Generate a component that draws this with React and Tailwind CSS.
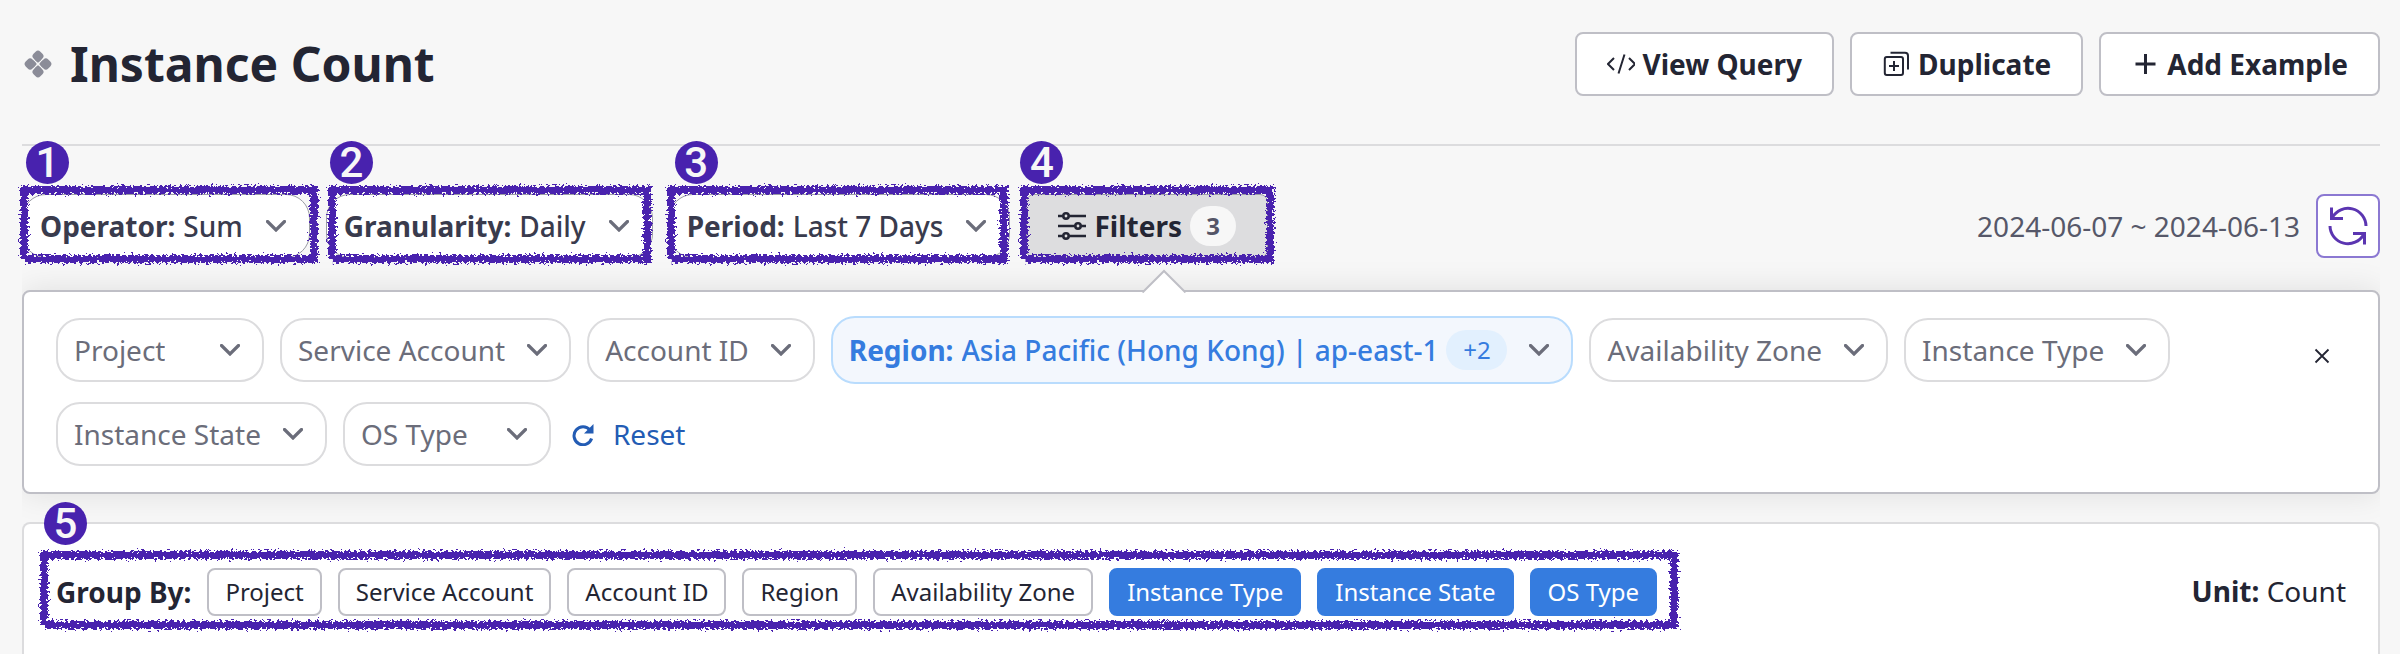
import { clsx } from "clsx";

const GROUPS = [
  { name: "Project" },
  { name: "Service Account" },
  { name: "Account ID" },
  { name: "Region" },
  { name: "Availability Zone" },
  { name: "Instance Type", on: true },
  { name: "Instance State", on: true },
  { name: "OS Type", on: true },
];

function Chevron() {
  return (
    <svg className="pointer-events-none ml-auto h-3 w-5 shrink-0" viewBox="0 0 20 12" fill="none" stroke="#6b6d7a" strokeWidth="3.2" aria-hidden="true">
      <path d="M1.5 1.5 10 10l8.5-8.5" strokeLinecap="round" strokeLinejoin="miter" />
    </svg>
  );
}

function RoughFilter() {
  return (
    <svg className="absolute h-0 w-0" aria-hidden="true">
      <filter id="rough" x="-5%" y="-20%" width="110%" height="140%">
        <feTurbulence type="fractalNoise" baseFrequency="0.35 0.5" numOctaves="3" seed="7" result="noise" />
        <feDisplacementMap in="SourceGraphic" in2="noise" scale="10" xChannelSelector="R" yChannelSelector="G" />
      </filter>
    </svg>
  );
}

function Callout({ number, box, badge }) {
  return (
    <>
      <span className={clsx("pointer-events-none absolute z-20 [clip-path:polygon(-4px_-4px,calc(100%+4px)_-4px,calc(100%+4px)_calc(100%+4px),5px_calc(100%+4px),5px_calc(100%-4px),-4px_calc(100%-4px))]", box)}>
        <span className="block h-full w-full border-8 border-[#4822ae] [filter:url(#rough)]" />
      </span>
      <span className={clsx("pointer-events-none absolute z-20 flex h-[43px] w-[43px] items-center justify-center rounded-full bg-[#4822ae] font-[Roboto] text-[42px] leading-10 font-medium text-[#f7f7f7]", badge)}>
        {number}
      </span>
    </>
  );
}

function Dropdown({ label, value, children }) {
  return (
    <div className="relative">
      <label className="flex h-16 items-center rounded-3xl border border-[#9b9ca5] bg-white pr-[23px] pl-[17px] text-[#393b4d]">
        <span className="mr-2 font-bold">{label}:</span>
        <select className="mr-[23px] appearance-none bg-transparent p-0 font-medium [field-sizing:content]">
          <option>{value}</option>
        </select>
        <Chevron />
      </label>
      {children}
    </div>
  );
}

function FilterSelect({ name }) {
  return (
    <div className="flex h-16 min-w-52 items-center rounded-3xl border-2 border-[#dcdcde] bg-white pr-[22px] pl-4 text-[#6b6d7a]">
      <select aria-label={name} className="mr-[22px] appearance-none bg-transparent p-0 [field-sizing:content]">
        <option>{name}</option>
      </select>
      <Chevron />
    </div>
  );
}

function ActionButton({ icon, children }) {
  return (
    <button className="flex h-16 items-center gap-2 rounded-lg border-2 border-[#bfbfc6] bg-white px-[30px] font-bold">
      {icon}
      {children}
    </button>
  );
}

const iconProps = { className: "h-7 w-7 shrink-0", viewBox: "0 0 28 28", fill: "none", stroke: "currentColor", "aria-hidden": true };

export default function App() {
  return (
    <div className="min-h-screen overflow-hidden bg-[#f7f7f7] pt-8 pr-5 pl-[22px] font-['Noto_Sans',sans-serif] text-[28px] leading-[38px] text-[#232533]">
      <RoughFilter />
      <header className="flex items-center border-b-2 border-[#dcdcde] pb-12">
        <svg className="h-8 w-8 shrink-0" viewBox="0 0 32 32" fill="#8b8c98" aria-hidden="true">
          <g transform="rotate(45 16 16)">
            <rect x="5.6" y="5.6" width="9.7" height="9.7" rx="3.4" />
            <rect x="16.7" y="5.6" width="9.7" height="9.7" rx="3.4" />
            <rect x="5.6" y="16.7" width="9.7" height="9.7" rx="3.4" />
            <rect x="16.7" y="16.7" width="9.7" height="9.7" rx="3.4" />
            <rect x="10" y="10" width="5.3" height="5.3" rx="1" />
            <rect x="16.7" y="10" width="5.3" height="5.3" rx="1" />
            <rect x="10" y="16.7" width="5.3" height="5.3" rx="1" />
            <rect x="16.7" y="16.7" width="5.3" height="5.3" rx="1" />
          </g>
        </svg>
        <h1 className="ml-4 text-5xl leading-[64px] font-bold">Instance Count</h1>
        <div className="ml-auto flex gap-4">
          <ActionButton
            icon={
              <svg {...iconProps} strokeWidth="2">
                <path d="m7 8-6 6 6 6M22 8l6 6-6 6M17.5 4.5l-6 19" />
              </svg>
            }
          >
            View Query
          </ActionButton>
          <ActionButton
            icon={
              <svg {...iconProps} strokeWidth="2">
                <rect x="2.8" y="7" width="18.2" height="18" rx="2" />
                <path d="M8.5 2.8H23a3 3 0 0 1 3 3V19.5M12 11v10M7 16h10" />
              </svg>
            }
          >
            Duplicate
          </ActionButton>
          <ActionButton
            icon={
              <svg {...iconProps} strokeWidth="3">
                <path d="M14.5 4v20M4.5 14h20" />
              </svg>
            }
          >
            Add Example
          </ActionButton>
        </div>
      </header>

      <div className="relative z-10 flex items-center gap-4 pt-12 pb-8">
        <Dropdown label="Operator" value="Sum">
          <Callout number="1" box="-top-2 -bottom-[5px] -left-0.5 -right-2" badge="-top-[53px] left-1" />
        </Dropdown>
        <Dropdown label="Granularity" value="Daily">
          <Callout number="2" box="-top-2 -bottom-[5px] left-0.5 right-0.5" badge="-top-[53px] left-1" />
        </Dropdown>
        <Dropdown label="Period" value="Last 7 Days">
          <Callout number="3" box="-top-2 -bottom-[5px] -left-0.5 right-0.5" badge="-top-[53px] left-1.5" />
        </Dropdown>
        <div className="relative">
          <button className="flex h-16 items-center gap-2 rounded-lg border border-[#9b9ca5] bg-[#dddddf] px-[31px] font-bold" aria-expanded="true">
            <svg {...iconProps} strokeWidth="2.6">
              <path d="M0 4h4.8M11.2 4H28M0 14h16.8M23.2 14H28M0 24h4.8M11.2 24H28" />
              <circle cx="8" cy="4" r="2.7" />
              <circle cx="20" cy="14" r="2.7" />
              <circle cx="8" cy="24" r="2.7" />
            </svg>
            Filters
            <span className="flex h-10 w-[46px] items-center justify-center rounded-[20px] bg-[#f7f7f7] text-2xl text-[#545567]">3</span>
          </button>
          <svg className="absolute top-[75px] left-[115px] h-6 w-[46px]" viewBox="0 0 46 24" fill="none" aria-hidden="true">
            <path d="M1 24 23 2l22 22z" fill="#fff" />
            <path d="M1.5 23.5 23 2l21.5 21.5" stroke="#bfbfc6" strokeWidth="2" />
          </svg>
          <Callout number="4" box="-top-2 -bottom-[5px] -left-1.5 -right-1.5" badge="-top-[53px] -left-1.5" />
        </div>
        <time className="ml-auto text-[#565869]">2024-06-07 ~ 2024-06-13</time>
        <button aria-label="Refresh" className="flex h-16 w-16 items-center justify-center rounded-lg border-2 border-[#8b78d2] bg-white text-[#5b35b1]">
          <svg className="h-10 w-10" viewBox="0 0 40 40" fill="none" stroke="currentColor" strokeWidth="3" aria-hidden="true">
            <path d="M38 20A18 18 0 0 0 4.3 11.5M2 20a18 18 0 0 0 33.7 8.5" />
            <path d="M3.5 1.5v11H15M36.5 38.5v-11H25" />
          </svg>
        </button>
      </div>

      <div className="[overflow-x:clip]">
        <section aria-label="Filters" className="flex items-start rounded-lg border-2 border-[#bfbfc6] bg-white py-6 pr-10 pl-8 shadow-[0_0_32px_rgba(0,0,0,0.1)]">
          <div className="flex flex-1 flex-wrap items-center gap-4">
            <FilterSelect name="Project" />
            <FilterSelect name="Service Account" />
            <FilterSelect name="Account ID" />
            <div className="flex h-[68px] items-center rounded-3xl border-2 border-[#b9dcfd] bg-[#f3f7fd] pr-[22px] pl-4 text-[#357cdf]">
              <label htmlFor="region" className="mr-2 font-bold">Region:</label>
              <select id="region" className="appearance-none bg-transparent p-0 font-medium [field-sizing:content]">
                <option>Asia Pacific (Hong Kong) | ap-east-1</option>
              </select>
              <span className="mr-[22px] ml-2 flex h-10 w-[61px] items-center justify-center rounded-[20px] bg-[#e2f0fe] text-2xl">+2</span>
              <Chevron />
            </div>
            <FilterSelect name="Availability Zone" />
            <FilterSelect name="Instance Type" />
            <FilterSelect name="Instance State" />
            <FilterSelect name="OS Type" />
            <button className="flex h-[68px] items-center gap-[18px] px-1 text-[#235cb4]">
              <svg className="h-6 w-6" viewBox="0 0 24 24" fill="none" stroke="currentColor" strokeWidth="3" aria-hidden="true">
                <path d="M20.6 16.5A9 9 0 1 1 19 8" />
                <path d="M22.5 2v9.5H13z" fill="currentColor" stroke="none" />
              </svg>
              Reset
            </button>
          </div>
          <button aria-label="Close" className="mt-6 flex h-8 w-8 items-center justify-center">
            <svg className="h-4 w-4" viewBox="0 0 16 16" fill="none" stroke="#232533" strokeWidth="1.8" aria-hidden="true">
              <path d="m1.5 1.5 13 13M14.5 1.5l-13 13" />
            </svg>
          </button>
        </section>
      </div>

      <section className="relative mt-7 flex min-h-40 items-start rounded-t-lg border-2 border-b-0 border-[#dcdcde] bg-white px-8 pt-11">
        <div className="relative flex items-center gap-4">
          <span className="font-bold">Group By:</span>
          {GROUPS.map(({ name, on }) => (
            <button
              key={name}
              aria-pressed={!!on}
              className={clsx(
                "h-12 rounded-lg border-2 px-4 text-2xl leading-8",
                on ? "border-[#357cdf] bg-[#357cdf] text-white" : "border-[#bfbfc6] bg-white"
              )}
            >
              {name}
            </button>
          ))}
          <Callout number="5" box="-top-[17px] -bottom-[13px] -left-4 -right-[21px]" badge="-top-[66px] -left-3" />
        </div>
        <p className="ml-auto pt-1">
          <strong>Unit:</strong> Count
        </p>
      </section>
    </div>
  );
}
